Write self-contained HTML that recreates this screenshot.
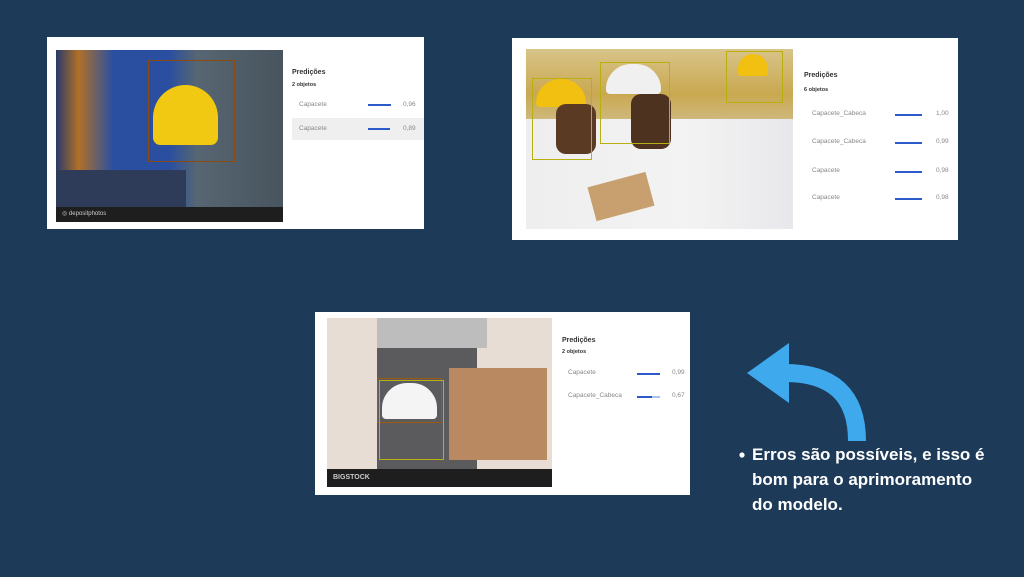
<!DOCTYPE html>
<html><head><meta charset="utf-8"><style>
body{margin:0;width:1024px;height:577px;background:#1d3a58;position:relative;overflow:hidden;font-family:"Liberation Sans",sans-serif}
.p{position:absolute;background:#fff}
.a{position:absolute;overflow:hidden}
.t{position:absolute;font-size:7px;color:#333;font-weight:bold}
.s{position:absolute;font-size:5.5px;color:#333}
.r{position:absolute;font-size:6.5px;color:#888}
.b{position:absolute;height:2px;background:#2a5bc8}
.box{position:absolute;border:1.5px solid}
.txt{position:absolute;left:752px;top:442px;color:#fff;font-weight:bold;font-size:17px;line-height:25px}
</style></head><body>

<div class="p" style="left:47px;top:37px;width:377px;height:192px">
 <div class="a" style="left:9px;top:13px;width:227px;height:172px;background:linear-gradient(90deg,#2a3a6a 0%,#b07028 10%,#2b4fa0 25%,#2b4fa0 50%,#566672 62%,#48545e 100%)">
  <div style="position:absolute;left:0;top:120px;width:130px;height:40px;background:#2e3c5a"></div>
  <div style="position:absolute;left:97px;top:35px;width:65px;height:60px;border-radius:35px 35px 8px 8px;background:#f2c912"></div>
  <div style="position:absolute;left:0;top:157px;width:227px;height:15px;background:#1e1e1e"></div>
  <div style="position:absolute;left:6px;top:160px;color:#ccc;font-size:6px">◎ depositphotos</div>
  <div class="box" style="left:92px;top:10px;width:85px;height:100px;border-color:#8a4a10"></div>
 </div>
 <div class="t" style="left:245px;top:32px">Predições</div>
 <div class="s" style="left:245px;top:45px;font-weight:bold">2 objetos</div>
 <div class="r" style="left:252px;top:64px">Capacete</div><div class="b" style="left:321px;top:67px;width:23px"></div><div class="r" style="left:356px;top:64px">0,96</div>
 <div style="position:absolute;left:245px;top:81px;width:132px;height:22px;background:#efefef"></div>
 <div class="r" style="left:252px;top:88px">Capacete</div><div class="b" style="left:321px;top:91px;width:22px"></div><div class="r" style="left:356px;top:88px">0,89</div>
</div>

<div class="p" style="left:512px;top:38px;width:446px;height:202px">
 <div class="a" style="left:14px;top:11px;width:267px;height:180px;background:linear-gradient(180deg,#d8c48a 0%,#c9a850 25%,#d8d0c0 60%,#cfc8b8 100%)">
  <div style="position:absolute;left:0;top:70px;width:267px;height:110px;background:linear-gradient(90deg,#eee 0%,#f3f3f3 60%,#e8e8ec 100%)"></div>
  <div style="position:absolute;left:10px;top:30px;width:50px;height:28px;border-radius:25px 25px 4px 4px;background:#f2c010"></div>
  <div style="position:absolute;left:80px;top:15px;width:55px;height:30px;border-radius:25px 25px 4px 4px;background:#f0f0f0"></div>
  <div style="position:absolute;left:212px;top:5px;width:30px;height:22px;border-radius:15px 15px 3px 3px;background:#f2c010"></div>
  <div style="position:absolute;left:30px;top:55px;width:40px;height:50px;background:#5a3a22;border-radius:10px"></div>
  <div style="position:absolute;left:105px;top:45px;width:40px;height:55px;background:#4e3220;border-radius:10px"></div>
  <div style="position:absolute;left:65px;top:130px;width:60px;height:35px;background:#c8a070;transform:rotate(-15deg)"></div>
  <div class="box" style="left:6px;top:29px;width:58px;height:80px;border-color:#b8b010"></div>
  <div class="box" style="left:74px;top:13px;width:68px;height:80px;border-color:#b8b010"></div>
  <div class="box" style="left:200px;top:2px;width:55px;height:50px;border-color:#b8b010"></div>
 </div>
 <div class="t" style="left:292px;top:34px">Predições</div>
 <div class="s" style="left:292px;top:49px;font-weight:bold">6 objetos</div>
 <div class="r" style="left:300px;top:72px">Capacete_Cabeca</div><div class="b" style="left:383px;top:76px;width:27px"></div><div class="r" style="left:424px;top:72px">1,00</div>
 <div class="r" style="left:300px;top:100px">Capacete_Cabeca</div><div class="b" style="left:383px;top:104px;width:27px"></div><div class="r" style="left:424px;top:100px">0,99</div>
 <div class="r" style="left:300px;top:129px">Capacete</div><div class="b" style="left:383px;top:133px;width:27px"></div><div class="r" style="left:424px;top:129px">0,98</div>
 <div class="r" style="left:300px;top:156px">Capacete</div><div class="b" style="left:383px;top:160px;width:27px"></div><div class="r" style="left:424px;top:156px">0,98</div>
</div>

<div class="p" style="left:315px;top:312px;width:375px;height:183px">
 <div class="a" style="left:12px;top:6px;width:225px;height:169px;background:#e8ddd4">
  <div style="position:absolute;left:50px;top:0;width:100px;height:155px;background:#5b5b5e"></div>
  <div style="position:absolute;left:50px;top:0;width:110px;height:30px;background:#bdbdbd"></div>
  <div style="position:absolute;left:122px;top:50px;width:98px;height:92px;background:#b98a62"></div>
  <div style="position:absolute;left:55px;top:65px;width:55px;height:36px;border-radius:25px 25px 4px 4px;background:#f4f4f4"></div>
  <div style="position:absolute;left:0;top:151px;width:225px;height:18px;background:#1e1e1e"></div>
  <div style="position:absolute;left:6px;top:156px;color:#ccc;font-size:7px;font-weight:bold">BIGSTOCK</div>
  <div class="box" style="left:50px;top:60px;width:63px;height:43px;border-color:#a05a10"></div>
  <div class="box" style="left:52px;top:62px;width:63px;height:78px;border-color:#b8b010"></div>
 </div>
 <div class="t" style="left:247px;top:25px">Predições</div>
 <div class="s" style="left:247px;top:37px;font-weight:bold">2 objetos</div>
 <div class="r" style="left:253px;top:57px">Capacete</div><div class="b" style="left:322px;top:61px;width:23px"></div><div class="r" style="left:357px;top:57px">0,99</div>
 <div class="r" style="left:253px;top:80px">Capacete_Cabeca</div><div class="b" style="left:322px;top:84px;width:15px"></div><div style="position:absolute;left:337px;top:84px;width:8px;height:2px;background:#a8c4ee"></div><div class="r" style="left:357px;top:80px">0,67</div>
</div>

<svg style="position:absolute;left:0;top:0" width="1024" height="577">
 <path d="M785,373 Q857,373 857,441" fill="none" stroke="#3fa9ee" stroke-width="18"/>
 <polygon points="747,373 789,343 789,403" fill="#3fa9ee"/>
 <circle cx="742" cy="455" r="2.6" fill="#fff"/>
</svg>
<div class="txt">Erros são possíveis, e isso é<br>bom para o aprimoramento<br>do modelo.</div>
</body></html>
